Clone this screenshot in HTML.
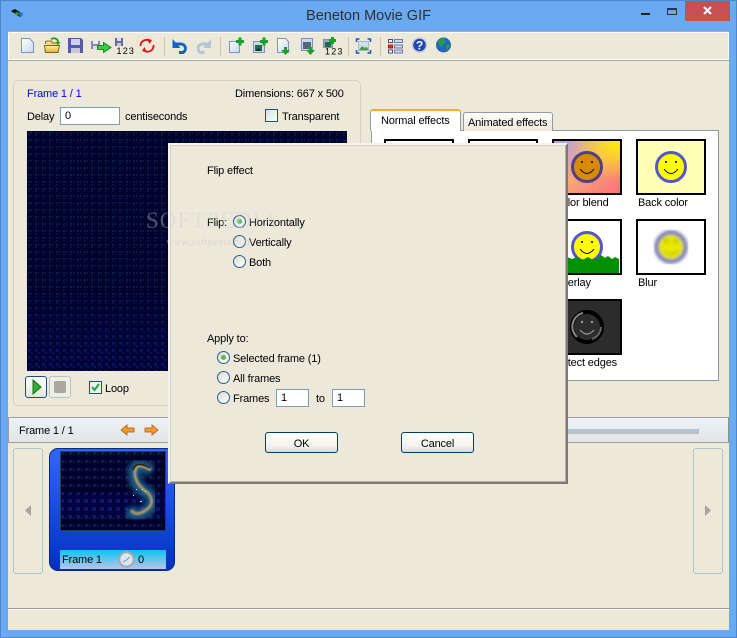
<!DOCTYPE html>
<html><head><meta charset="utf-8">
<style>
*{box-sizing:border-box}
html,body{margin:0;padding:0;background:#6aa9f4}
#w{position:relative;width:737px;height:638px;overflow:hidden;background:#6aa9f4;font:11px "Liberation Sans",sans-serif;color:#000}
.a{position:absolute}
.t{position:absolute;white-space:nowrap;line-height:13px;font-size:11px;letter-spacing:-.15px;margin-top:1px}
.rad{position:absolute;width:13px;height:13px;border-radius:50%;border:1px solid #2d5f91;background:linear-gradient(135deg,#dcd9cf,#fff)}
.rad.on:after{content:"";position:absolute;left:3px;top:3px;width:5px;height:5px;border-radius:50%;background:#4fc04f}
.inp{position:absolute;background:#fff;border:1px solid #7f9db9;line-height:16px;padding-left:4px;font-size:11px}
.btn{position:absolute;width:73px;height:21px;border:1px solid #003c74;border-radius:3px;background:linear-gradient(#fff,#f2f1ea 70%,#dcd8cc);text-align:center;line-height:22px;font-size:11px;letter-spacing:-.15px}
.th{position:absolute;width:70px;height:56px;border:2px solid #000;background:#fff;overflow:hidden}
.side{position:absolute;width:30px;height:126px;border:1px solid #b4c3c8;border-radius:3px;background:#ece9da}
</style></head><body>
<div id="w">
<div class="a" style="left:0;top:0;width:737px;height:638px;border:1px solid #4f86c8"></div>
<svg class="a" style="left:10px;top:8px" width="15" height="11"><path d="M1 3l4-2 8 5-3 3z" fill="#0a3a1a"/><path d="M1 3l4-2 3 2-4 2z" fill="#201008"/><path d="M8 5l3 0 2 2-2 2z" fill="#3a70e0"/><path d="M6 4l3 1-2 3-2-2z" fill="#3c9a3c"/></svg>
<div class="a" style="left:0;width:737px;top:7px;text-align:center;font-size:14.5px;line-height:19px;color:#303030">Beneton Movie GIF</div>
<div class="a" style="left:641px;top:13px;width:9px;height:2px;background:#222"></div>
<div class="a" style="left:667px;top:8px;width:10px;height:7px;border:1px solid #333;border-top-width:2px"></div>
<div class="a" style="left:685px;top:1px;width:45px;height:20px;background:#c75050"></div>
<svg class="a" style="left:702px;top:6px" width="11" height="10"><path d="M2 1l7 7M9 1L2 8" stroke="#fff" stroke-width="2"/></svg>

<div class="a" style="left:8px;top:31px;width:721px;height:599px;background:#ece9da;border-top:1px solid #a8b0b0"></div>
<div class="a" style="left:8px;top:32px;width:721px;height:28px;border:1px solid #fff;border-right-color:#f8f8f4;box-shadow:0 1px 0 #a8a8a0"></div>

<svg class="a" style="left:0;top:0" width="460" height="62" font-family="Liberation Sans,sans-serif">
<defs><linearGradient id="pg" x1="0" y1="0" x2="1" y2="1"><stop offset="0" stop-color="#fff"/><stop offset="1" stop-color="#c5d7f2"/></linearGradient>
<linearGradient id="fo" x1="0" y1="0" x2="0" y2="1"><stop offset="0" stop-color="#fff3a8"/><stop offset="1" stop-color="#e0b030"/></linearGradient></defs>
<path d="M21.500 38.500h8l4 4v10h-12z" fill="url(#pg)" stroke="#8090c8"/>
<path d="M45.500 44v-2q0-1 2-1h4l1 2h5v3" fill="#f0d878" stroke="#907020"/><path d="M45.500 52.500l-1-7h15l-1.500 7z" fill="url(#fo)" stroke="#806818"/><path d="M51 39q5-2 7 2l0 3" fill="none" stroke="#20a020" stroke-width="1.800"/><path d="M55.500 42h5l-2.500 3z" fill="#20a020"/>
<path d="M68 38h13l2 2v13H68z" fill="#5858a8"/><rect x="71" y="39" width="9" height="6" fill="#d0d0e8"/><rect x="71" y="48" width="9" height="5" fill="#c8c8d8"/>
<path d="M91 41h9v8h-9z" fill="#8888b0"/><rect x="93" y="41" width="5" height="3" fill="#eee"/><rect x="93" y="46" width="5" height="3" fill="#ddd"/>
<path d="M97.500 45.500h6v-3l7.500 5-7.500 5v-3h-6z" fill="#30d040" stroke="#107010" stroke-width=".8"/>
<path d="M115 38h8v8h-8z" fill="#6868a8"/><rect x="117" y="38" width="4" height="3" fill="#ddd"/><rect x="117" y="43" width="4" height="3" fill="#ccc"/>
<text x="116.500" y="54" font-size="9" letter-spacing="1.200">123</text>
<path d="M140.500 46a6 6 0 0 1 9.500-5" fill="none" stroke="#e81010" stroke-width="1.800"/><path d="M153.500 45a6 6 0 0 1-9.500 5.500" fill="none" stroke="#e81010" stroke-width="1.800"/><path d="M147 38.500l5 1.500-2.500 4zM147 52.500l-5-1.500 2.500-4z" fill="#e81010"/>
<line x1="164.500" y1="37" x2="164.500" y2="56" stroke="#c8c4b4"/>
<path d="M175 44h6a4.500 4.500 0 0 1 2 8.500h-4" fill="none" stroke="#1064c8" stroke-width="3"/><path d="M172.500 39v9h8z" fill="#1064c8"/>
<path d="M208.500 44h-6a4.500 4.500 0 0 0-2 8.500h4" fill="none" stroke="#b4c8d4" stroke-width="3"/><path d="M211 39v9h-8z" fill="#b4c8d4"/>
<line x1="220.500" y1="37" x2="220.500" y2="56" stroke="#c8c4b4"/>
<path d="M229.500 41.500h10v11h-10z" fill="url(#pg)" stroke="#8090c8"/><path d="M236 40h2.500v-2.500h3V40h2.500v3h-2.500v2.500h-3V43H236z" fill="#18a028"/>
<path d="M253.500 41.500h11v11h-11z" fill="#c8d8f0" stroke="#8090b8"/><rect x="255" y="45" width="7" height="6" fill="#207040"/><path d="M255 51l3-3 4 3z" fill="#103828"/><path d="M260 40h2.500v-2.500h3V40h2.500v3h-2.500v2.500h-3V43H260z" fill="#18a028"/>
<path d="M277.500 38.500h8l3 3v11h-11z" fill="url(#pg)" stroke="#8090c8"/><path d="M284 47v3h-3l4.500 5 4.500-5h-3v-3z" fill="#18a028"/>
<path d="M301.500 38.500h11v12h-11z" fill="#c8d8f0" stroke="#8090b8"/><rect x="303" y="42" width="8" height="7" fill="#506878"/><path d="M309 47v3h-3l4.500 5 4.500-5h-3v-3z" fill="#18a028"/>
<rect x="323.500" y="39.500" width="9" height="8" fill="#98a8c0" stroke="#8090a8"/><rect x="325" y="42" width="6" height="5" fill="#206848"/><path d="M329 39h2v-2h3v2h2v3h-2v2h-3v-2h-2z" fill="#18a028"/>
<text x="325" y="54.500" font-size="9" letter-spacing="1.200">123</text>
<line x1="348.500" y1="37" x2="348.500" y2="56" stroke="#c8c4b4"/>
<rect x="358.500" y="41.500" width="10" height="9" fill="#cfe0ee" stroke="#8898a8" stroke-width=".6"/><path d="M359 50l3-4 3 2 1.500-1.500 2 3.500z" fill="#40a050"/><path d="M356.500 42v-3h3M367.500 39h3v3M370.500 50v3h-3M359.500 53h-3v-3" fill="none" stroke="#1458b0" stroke-width="1.500"/>
<line x1="380.500" y1="37" x2="380.500" y2="56" stroke="#c8c4b4"/>
<rect x="388.500" y="39.500" width="4" height="3" fill="#fff" stroke="#48488a"/><rect x="388.500" y="45" width="4" height="3" fill="#f03030" stroke="#b01010"/><rect x="388.500" y="50" width="4" height="3" fill="#fff" stroke="#48488a"/><rect x="394.500" y="39.500" width="8" height="3" fill="#cdd6ea" stroke="#7078a8"/><rect x="394.500" y="45" width="8" height="3" fill="#cdd6ea" stroke="#7078a8"/><rect x="394.500" y="50" width="8" height="3" fill="#cdd6ea" stroke="#7078a8"/>
<circle cx="419.500" cy="45" r="7" fill="#1a48b8" stroke="#c8ccd8" stroke-width="1.500"/><text x="419.500" y="49.500" text-anchor="middle" font-size="12" font-weight="bold" fill="#fff">?</text>
<circle cx="443.500" cy="45" r="7.500" fill="#2466c0"/><path d="M438 41q3-4 7-2l1 3-3 2-1 4-3-3zM446 45l4 0-2 5-2-2z" fill="#2a9a4a"/>
</svg>

<div class="a" style="left:13px;top:80px;width:348px;height:326px;border:1px solid #d4d1c2;border-radius:5px"></div>
<div class="t" style="left:27px;top:87px;color:#0000ff">Frame 1 / 1</div>
<div class="t" style="left:235px;top:87px">Dimensions: 667 x 500</div>
<div class="t" style="left:27px;top:110px">Delay</div>
<div class="inp" style="left:60px;top:107px;width:60px;height:18px">0</div>
<div class="t" style="left:125px;top:110px">centiseconds</div>
<div class="a" style="left:265px;top:109px;width:13px;height:13px;border:1px solid #1c5180;background:linear-gradient(135deg,#dcdcd7,#fff)"></div>
<div class="t" style="left:282px;top:110px">Transparent</div>

<svg class="a" style="left:27px;top:131px" width="320" height="240">
<defs>
<pattern id="p1" width="7" height="7" patternUnits="userSpaceOnUse"><rect width="7" height="7" fill="#00002e"/><rect x="1" y="1" width="2" height="2" fill="#062048"/><rect x="4" y="1" width="1" height="2" fill="#04263c"/><rect x="1" y="4" width="2" height="1" fill="#04203e"/></pattern>
<pattern id="p2" width="7" height="7" patternUnits="userSpaceOnUse"><rect width="7" height="7" fill="#00003c"/><rect x="1" y="1" width="3" height="3" fill="#06166c"/><rect x="4" y="4" width="2" height="2" fill="#06205c"/></pattern>
<linearGradient id="fd" x1="0" y1="0" x2="0" y2="1"><stop offset="0" stop-color="#fff"/><stop offset=".65" stop-color="#fff"/><stop offset="1" stop-color="#222"/></linearGradient>
<mask id="mk"><rect width="320" height="240" fill="url(#fd)"/></mask>
</defs>
<rect width="320" height="240" fill="url(#p2)"/><rect width="320" height="240" fill="url(#p1)" mask="url(#mk)"/></svg>

<div class="a" style="left:25px;top:376px;width:22px;height:22px;border:1px solid #1c4c7c;border-radius:3px;background:linear-gradient(#fff,#e8e6da)"></div>
<svg class="a" style="left:31px;top:379px" width="12" height="16"><path d="M2 1l8 7-8 7z" fill="#30b030" stroke="#107010"/></svg>
<div class="a" style="left:49px;top:376px;width:22px;height:22px;border:1px solid #b8c4c4;border-radius:3px;background:#efeee4"></div>
<div class="a" style="left:54px;top:381px;width:12px;height:12px;background:#aaa89c;border-radius:2px"></div>
<div class="a" style="left:89px;top:381px;width:13px;height:13px;border:1px solid #1c5180;background:#f2f1ea"></div>
<svg class="a" style="left:90px;top:382px" width="11" height="11"><path d="M2 5l2.500 3L9 2" fill="none" stroke="#22a83c" stroke-width="2"/></svg>
<div class="t" style="left:105px;top:382px">Loop</div>

<div class="a" style="left:371px;top:130px;width:348px;height:251px;background:#fff;border:1px solid #919b9c"></div>
<div class="a" style="left:463px;top:112px;width:90px;height:19px;background:linear-gradient(#fff,#ece9da);border:1px solid #919b9c;border-bottom:0;border-radius:3px 3px 0 0"></div>
<div class="t" style="left:468px;top:116px">Animated effects</div>
<div class="a" style="left:370px;top:109px;width:91px;height:22px;background:#fff;border:1px solid #919b9c;border-top:2px solid #f5aa30;border-bottom:0;border-radius:3px 3px 0 0"></div>
<div class="t" style="left:381px;top:114px">Normal effects</div>

<div class="th" style="left:384px;top:139px"></div>
<div class="th" style="left:468px;top:139px"></div>
<div class="th" style="left:552px;top:139px">
<svg width="66" height="52" style="display:block"><defs><linearGradient id="cb" x1="0" y1="0" x2="1" y2="1"><stop offset="0" stop-color="#b0a0f0"/><stop offset=".5" stop-color="#f8a878"/><stop offset="1" stop-color="#fa7078"/></linearGradient><radialGradient id="cy" cx="1" cy="0" r=".75"><stop offset="0" stop-color="#fff000"/><stop offset="1" stop-color="#fff000" stop-opacity="0"/></radialGradient></defs><rect width="66" height="52" fill="url(#cb)"/><rect width="66" height="52" fill="url(#cy)"/><circle cx="33" cy="26" r="14.500" fill="#d88a00" stroke="#50408a" stroke-width="3"/><circle cx="28" cy="21" r="1" fill="#000"/><circle cx="38" cy="21" r="1" fill="#000"/><path d="M26 28q7 9 14 0" fill="none" stroke="#000" stroke-width="1"/></svg></div>
<div class="th" style="left:636px;top:139px;background:#ffffb8">
<svg width="66" height="52" style="display:block"><circle cx="33" cy="26" r="14.500" fill="#ffff00" stroke="#5555d0" stroke-width="3"/><circle cx="28" cy="21" r="1" fill="#000"/><circle cx="38" cy="21" r="1" fill="#000"/><path d="M26 28q7 9 14 0" fill="none" stroke="#000" stroke-width="1"/></svg></div>
<div class="t" style="left:638px;top:196px">Back color</div>
<div class="t" style="left:554px;top:196px">Color blend</div>
<div class="th" style="left:552px;top:219px">
<svg width="66" height="52" style="display:block"><path d="M0 0h8L0 8z" fill="#ffff00"/><circle cx="33" cy="26" r="14.500" fill="#ffff00" stroke="#5555d0" stroke-width="3"/><circle cx="28" cy="21" r="1" fill="#000"/><circle cx="38" cy="21" r="1" fill="#000"/><path d="M26 28q7 9 14 0" fill="none" stroke="#000" stroke-width="1"/><path d="M0 52V38l5-1 4 2 4-3 5 2 5-2 5 3 6-3 5 3 5-2 3-3 4 3 3-2 4 3 3-2 4 2v16z" fill="#009000"/></svg></div>
<div class="th" style="left:636px;top:219px">
<svg width="66" height="52" style="display:block"><defs><filter id="bl"><feGaussianBlur stdDeviation="1.800"/></filter></defs><g filter="url(#bl)"><circle cx="33" cy="26" r="14.500" fill="#e8e800" stroke="#6464b8" stroke-width="4"/><circle cx="28" cy="20" r="2.500" fill="#c4c400"/><circle cx="38" cy="20" r="2.500" fill="#c4c400"/><path d="M26 30q7 7 14 0" fill="none" stroke="#c4c400" stroke-width="2"/></g></svg></div>
<div class="t" style="left:638px;top:276px">Blur</div>
<div class="t" style="left:554px;top:276px">Overlay</div>
<div class="th" style="left:552px;top:299px;background:#2c2c2c">
<svg width="66" height="52" style="display:block"><circle cx="33" cy="26" r="15" fill="none" stroke="#000" stroke-width="4"/><path d="M23 36a14 14 0 0 1 6-24" fill="none" stroke="#888" stroke-width="2"/><path d="M38 38a13 13 0 0 0 9-12" fill="none" stroke="#666" stroke-width="2"/><circle cx="28" cy="21" r="1.200" fill="#999"/><circle cx="38" cy="21" r="1.200" fill="#999"/><path d="M26 29q7 8 14 0" fill="none" stroke="#999" stroke-width="1.200"/></svg></div>
<div class="t" style="left:554px;top:356px">Detect edges</div>

<div class="a" style="left:8px;top:417px;width:721px;height:26px;background:linear-gradient(#ecf2f8,#e3e4e4);border-top:1px solid #9aa09a;border-bottom:1px solid #9aa09a;border-left:1px solid #9aa09a;border-right:1px solid #8a908a"></div>
<div class="t" style="left:19px;top:424px">Frame 1 / 1</div>
<svg class="a" style="left:120px;top:423px" width="40" height="14"><path d="M1 7l6-5v3h7v4H7v3z" fill="#f09a30" stroke="#b05810" stroke-width=".8"/><path d="M38 7l-6-5v3h-7v4h7v3z" fill="#f09a30" stroke="#b05810" stroke-width=".8"/></svg>
<div class="a" style="left:560px;top:429px;width:139px;height:5px;background:linear-gradient(#b0c8dc,#bcbcbc)"></div>

<div class="side" style="left:13px;top:448px"></div>
<svg class="a" style="left:24px;top:504px" width="8" height="13"><path d="M7 1v11L1 6.500z" fill="#a8a69a"/></svg>
<div class="side" style="left:693px;top:448px"></div>
<svg class="a" style="left:704px;top:504px" width="8" height="13"><path d="M1 1v11l6-5.500z" fill="#a8a69a"/></svg>

<div class="a" style="left:49px;top:448px;width:126px;height:123px;border-radius:9px;background:linear-gradient(#3264ff,#0032c0);border:1px solid #002a90"></div>
<svg class="a" style="left:60px;top:451px" width="106" height="80">
<defs><pattern id="p3" width="8" height="8" patternUnits="userSpaceOnUse"><rect width="8" height="8" fill="#000030"/><rect x="1" y="1" width="3" height="3" fill="#04203e"/><rect x="5" y="1" width="1" height="3" fill="#06283c"/></pattern>
<pattern id="p4" width="8" height="8" patternUnits="userSpaceOnUse"><rect width="8" height="8" fill="#00003c"/><rect x="0" y="0" width="4" height="4" fill="#061870"/></pattern>
<filter id="sb"><feGaussianBlur stdDeviation=".7"/></filter><filter id="sb2"><feGaussianBlur stdDeviation="3"/></filter></defs>
<rect width="106" height="80" fill="url(#p3)"/><rect y="42" width="106" height="24" fill="url(#p4)"/><rect y="66" width="106" height="14" fill="url(#p3)"/>
<path d="M92 20Q74 8 74 22T88 42Q98 52 86 60T68 58" fill="none" stroke="#1c5c84" stroke-width="12" filter="url(#sb2)"/>
<path d="M91 19Q76 10 75 21T88 42Q96 52 86 59T71 59" fill="none" stroke="#a89468" stroke-width="3" filter="url(#sb)"/>
<path d="M90 17Q76 9 73 19" fill="none" stroke="#301c0c" stroke-width="1.500"/>
<g fill="#dfe8f0"><rect x="82" y="38" width="1" height="1"/><rect x="85" y="40" width="1" height="1"/><rect x="73" y="44" width="1" height="1"/><rect x="80" y="50" width="2" height="1"/><rect x="76" y="38" width="1" height="1"/></g>
<rect x=".5" y=".5" width="105" height="79" fill="none" stroke="#283a60"/></svg>
<div class="a" style="left:60px;top:550px;width:106px;height:19px;background:linear-gradient(#0cc4f0,#b8c4e8)"></div>
<div class="t" style="left:62px;top:553px">Frame 1</div>
<svg class="a" style="left:118px;top:551px" width="17" height="17"><circle cx="8.500" cy="8.500" r="7.200" fill="#d8e8f4" stroke="#a8a8a8" stroke-width="2"/><path d="M8.500 9L5 11M8.500 9l3-3" stroke="#8890a0" fill="none"/></svg>
<div class="t" style="left:138px;top:553px">0</div>

<div class="a" style="left:8px;top:608px;width:721px;height:2px;background:#fff;border-top:1px solid #a09c8c"></div>

<div class="a" style="left:168px;top:143px;width:400px;height:341px;background:#ece9da;border:2px solid;border-color:#f4f3ec #7c7a70 #7c7a70 #f4f3ec;box-shadow:inset 1px 1px 0 #d4d0c4,inset -1px -1px 0 #b4b2a6"></div>
<div class="t" style="left:207px;top:164px">Flip effect</div>
<div class="t" style="left:207px;top:216px">Flip:</div>
<div class="rad on" style="left:233px;top:215px"></div>
<div class="t" style="left:249px;top:216px">Horizontally</div>
<div class="rad" style="left:233px;top:235px"></div>
<div class="t" style="left:249px;top:236px">Vertically</div>
<div class="rad" style="left:233px;top:255px"></div>
<div class="t" style="left:249px;top:256px">Both</div>
<div class="t" style="left:207px;top:332px">Apply to:</div>
<div class="rad on" style="left:217px;top:351px"></div>
<div class="t" style="left:233px;top:352px">Selected frame (1)</div>
<div class="rad" style="left:217px;top:371px"></div>
<div class="t" style="left:233px;top:372px">All frames</div>
<div class="rad" style="left:217px;top:391px"></div>
<div class="t" style="left:233px;top:392px">Frames</div>
<div class="inp" style="left:276px;top:389px;width:33px;height:18px">1</div>
<div class="t" style="left:316px;top:392px">to</div>
<div class="inp" style="left:332px;top:389px;width:33px;height:18px">1</div>
<div class="btn" style="left:265px;top:432px">OK</div>
<div class="btn" style="left:401px;top:432px">Cancel</div>

<div class="a" style="left:146px;top:208px;font:23px/26px 'Liberation Serif',serif;color:#fff;opacity:.3;letter-spacing:1px;white-space:nowrap">SOFTPEDIA</div>
<div class="a" style="left:166px;top:237px;font:10px/12px 'Liberation Serif',serif;color:#fff;opacity:.3;letter-spacing:.4px;white-space:nowrap">www.softpedia.com</div>
<div class="a" style="left:170px;top:204px;width:110px;height:50px;overflow:hidden"><div class="a" style="left:-24px;top:4px;font:23px/26px 'Liberation Serif',serif;color:#777;opacity:.13;letter-spacing:1px;white-space:nowrap">SOFTPEDIA</div><div class="a" style="left:-4px;top:33px;font:10px/12px 'Liberation Serif',serif;color:#777;opacity:.2;letter-spacing:.4px;white-space:nowrap">www.softpedia.com</div></div>
</div>
</body></html>
